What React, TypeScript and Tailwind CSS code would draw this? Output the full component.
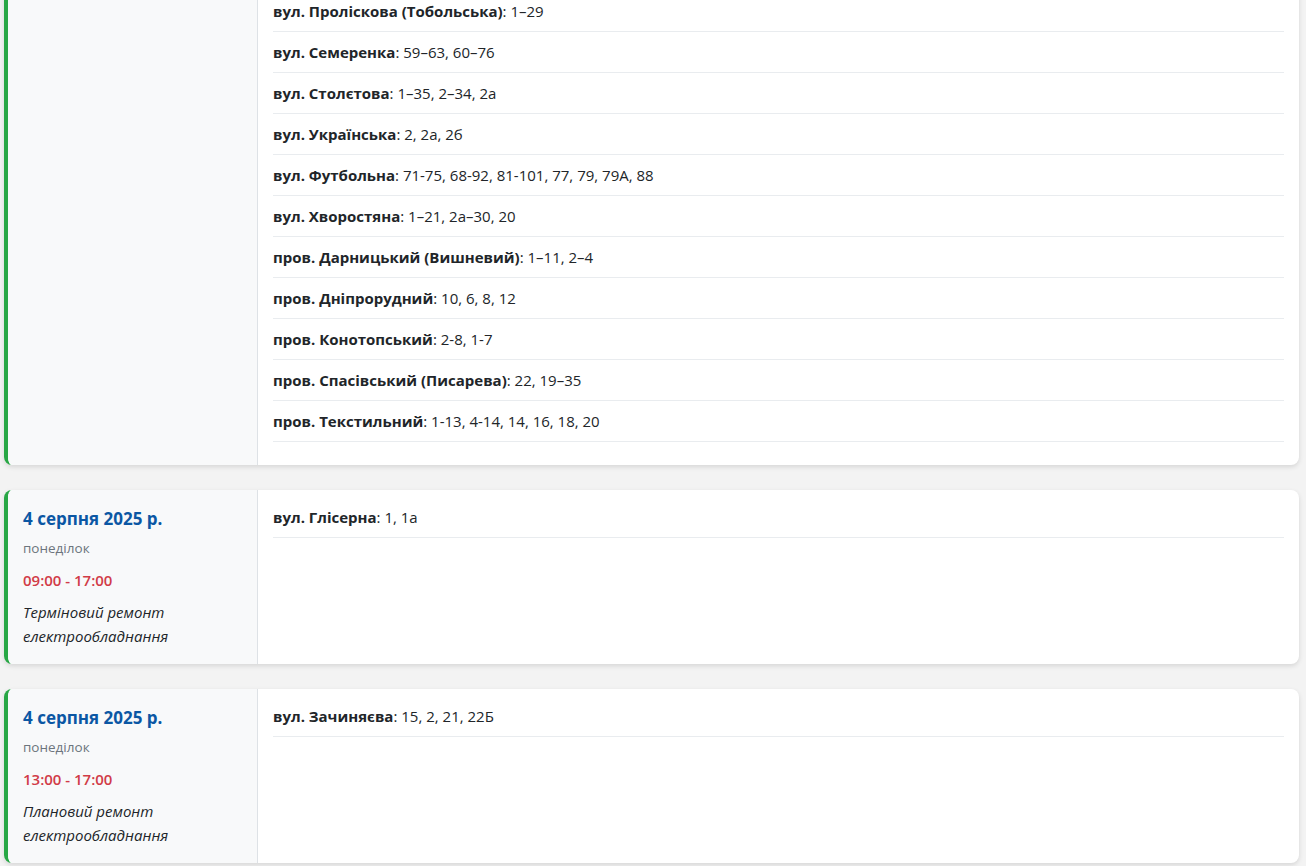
import React from 'react';

type Street = { name: string; houses: string };

type Outage = {
  date?: string;
  day?: string;
  time?: string;
  reason?: string;
  streets: Street[];
};

const outages: Outage[] = [
  {
    streets: [
      { name: 'вул. Пролiскова (Тобольська)', houses: '1–29' },
      { name: 'вул. Семеренка', houses: '59–63, 60–76' },
      { name: 'вул. Столєтова', houses: '1–35, 2–34, 2а' },
      { name: 'вул. Українська', houses: '2, 2а, 2б' },
      { name: 'вул. Футбольна', houses: '71-75, 68-92, 81-101, 77, 79, 79А, 88' },
      { name: 'вул. Хворостяна', houses: '1–21, 2а–30, 20' },
      { name: 'пров. Дарницький (Вишневий)', houses: '1–11, 2–4' },
      { name: 'пров. Дніпрорудний', houses: '10, 6, 8, 12' },
      { name: 'пров. Конотопський', houses: '2-8, 1-7' },
      { name: 'пров. Спасівський (Писарева)', houses: '22, 19–35' },
      { name: 'пров. Текстильний', houses: '1-13, 4-14, 14, 16, 18, 20' },
    ],
  },
  {
    date: '4 серпня 2025 р.',
    day: 'понеділок',
    time: '09:00 - 17:00',
    reason: 'Терміновий ремонт електрообладнання',
    streets: [{ name: 'вул. Глісерна', houses: '1, 1а' }],
  },
  {
    date: '4 серпня 2025 р.',
    day: 'понеділок',
    time: '13:00 - 17:00',
    reason: 'Плановий ремонт електрообладнання',
    streets: [{ name: 'вул. Зачиняєва', houses: '15, 2, 21, 22Б' }],
  },
];

const OutageCard: React.FC<{ outage: Outage }> = ({ outage }) => {
  return (
    <div className="flex bg-white rounded-lg border-l-4 border-[#28a745] shadow-[0_2px_5px_rgba(0,0,0,0.12)] overflow-hidden">
      <div className="w-[250px] shrink-0 bg-[#f8f9fa] border-r border-[#dee2e6] px-[15px] pt-[15px] pb-[16px]">
        {outage.date && (
          <>
            <div className="text-[17px] leading-[28px] font-bold text-[#0b57a4]">
              {outage.date}
            </div>
            <div className="text-[13.5px] leading-[20px] text-[#6c757d] mt-[5px]">
              {outage.day}
            </div>
            <div className="text-[15px] leading-[20px] font-semibold text-[#d13b47] mt-[12px]">
              {outage.time}
            </div>
            <div className="text-[15px] leading-[24px] italic text-[#212529] mt-[10px] pr-[20px]">
              {outage.reason}
            </div>
          </>
        )}
      </div>
      <div className="flex-1 px-[15px] pt-[7px] pb-[23px]">
        {outage.streets.map((s) => (
          <div
            key={s.name}
            className="pt-[8px] pb-[8px] leading-[24px] text-[15px] text-[#212529] border-b border-[#e9ecef]"
          >
            <span className="font-bold">{s.name}</span>: {s.houses}
          </div>
        ))}
      </div>
    </div>
  );
};

const App: React.FC = () => {
  return (
    <div
      className="min-h-screen bg-[#f3f3f3] pl-[4px] pr-[7px] overflow-hidden"
      style={{ fontFamily: '"Open Sans", "Noto Sans", sans-serif' }}
    >
      <div className="flex flex-col gap-[25px] -mt-[16px] pb-[20px]">
        {outages.map((o, i) => (
          <OutageCard key={i} outage={o} />
        ))}
      </div>
    </div>
  );
};

export default App;
